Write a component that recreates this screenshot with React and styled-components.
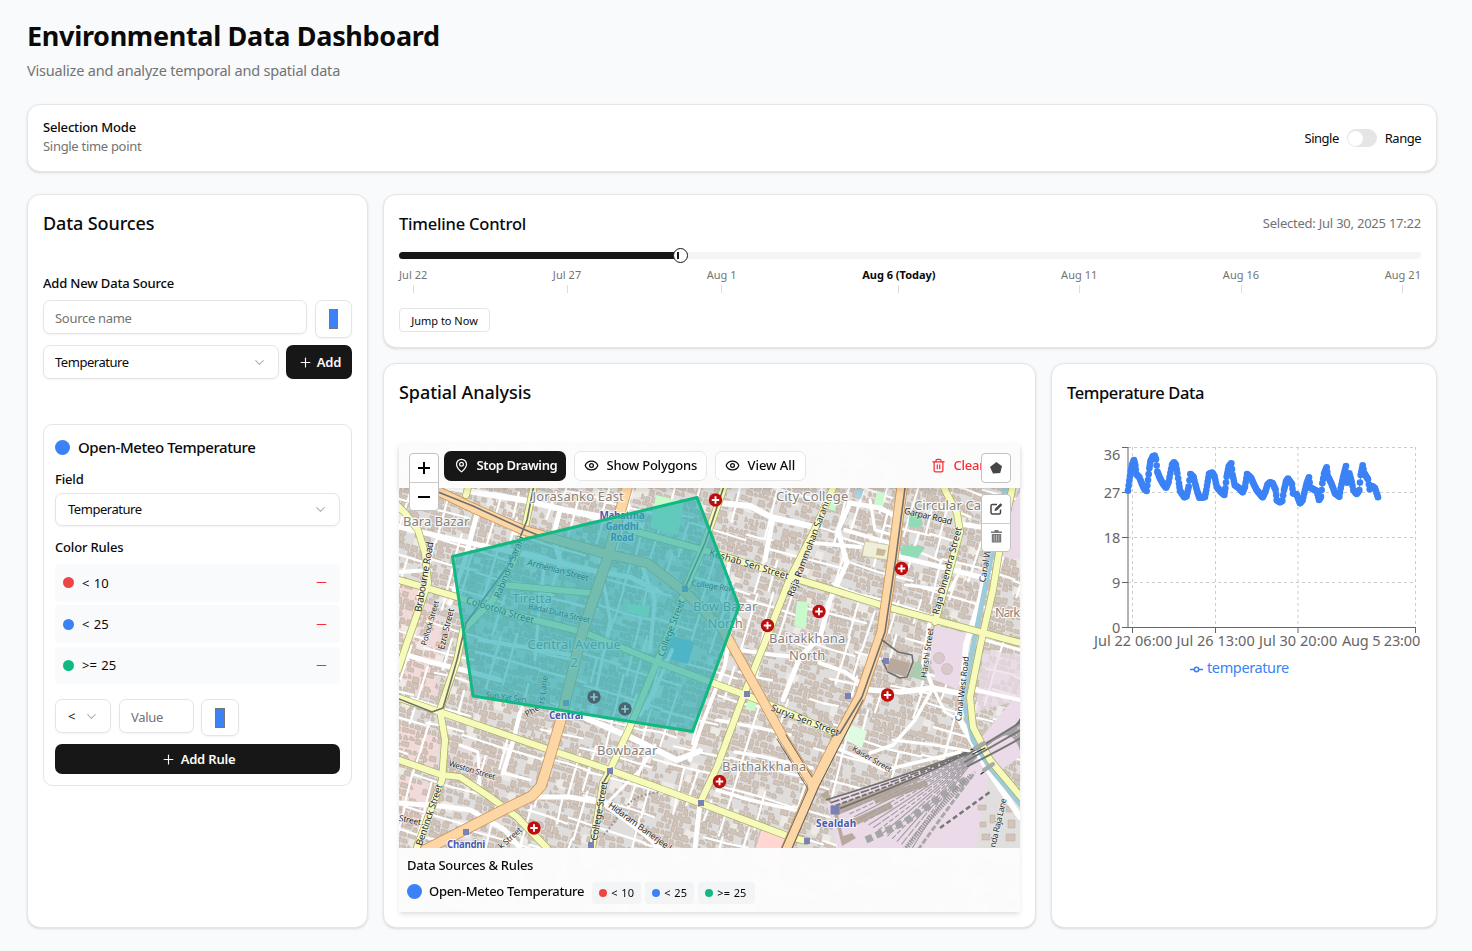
import React from "react";
import styled, { createGlobalStyle } from "styled-components";
import { ChevronDown, Eye, MapPin, Minus, Plus, Trash2 } from "lucide-react";

const GlobalStyle = createGlobalStyle`
  *, *::before, *::after { box-sizing: border-box; }
  body {
    margin: 0;
    background: #f9fafc;
    color: #0a0a0a;
    font-family: "Noto Sans", "Open Sans", sans-serif;
    font-size: 13px;
    letter-spacing: -0.02em;
  }
  h1, h2, h3, p { margin: 0; }
  button, input { font: inherit; letter-spacing: inherit; color: inherit; }
`;

const Page = styled.main`
  display: flex;
  flex-direction: column;
  height: 951px;
  padding: 20px 35px 23px 27px;
`;

const PageTitle = styled.h1`
  font-size: 27px;
  line-height: 32px;
  font-weight: 700;
  letter-spacing: -0.32px;
`;

const PageSubtitle = styled.p`
  margin-top: 7px;
  margin-bottom: 23px;
  font-size: 14.5px;
  line-height: 22px;
  letter-spacing: -0.2px;
  color: #737373;
`;

const Card = styled.section`
  display: flex;
  flex-direction: column;
  background: #fff;
  border: 1px solid #e5e5e5;
  border-radius: 13px;
  box-shadow: 0 1px 3px rgba(0, 0, 0, 0.1), 0 1px 2px -1px rgba(0, 0, 0, 0.1);
  padding: ${(p) => p.$top || 16}px 15px 15px;
`;

const ModeCard = styled(Card)`
  flex: none;
  flex-direction: row;
  align-items: center;
  justify-content: space-between;
  height: 68px;
  margin-bottom: 22px;
  padding: 0 15px;
`;

const ModeName = styled.div`
  font-weight: 500;
  line-height: 19px;
  margin-top: -3px;
  letter-spacing: -0.17px;
`;

const Muted = styled.div`
  line-height: 19px;
  margin-top: ${(p) => p.$lift || 0}px;
  color: #737373;
  letter-spacing: ${(p) => p.$track || -0.3}px;
`;

const SwitchGroup = styled.div`
  display: flex;
  align-items: center;
  gap: 8px;
  letter-spacing: -0.5px;
`;

const SwitchTrack = styled.span`
  display: flex;
  align-items: center;
  width: 30px;
  height: 18px;
  padding: 1px;
  border-radius: 9px;
  background: #e5e5e5;
`;

const SwitchThumb = styled.span`
  width: 15px;
  height: 15px;
  border-radius: 50%;
  background: #fff;
`;

const Columns = styled.div`
  display: grid;
  grid-template-columns: 341px 1fr;
  gap: 15px;
  flex: 1;
  min-height: 0;
`;

const MainColumn = styled.div`
  display: grid;
  grid-template-rows: 154px 1fr;
  gap: 15px;
  min-height: 0;
`;

const BottomRow = styled.div`
  display: grid;
  grid-template-columns: 653px 1fr;
  gap: 15px;
  min-height: 0;
`;

const CardTitle = styled.h2`
  font-size: ${(p) => p.$size || 18}px;
  line-height: 24px;
  font-weight: 500;
  letter-spacing: ${(p) => p.$track || -0.1}px;
`;

const Label = styled.div`
  font-weight: 500;
  line-height: 18px;
  letter-spacing: ${(p) => p.$track || -0.17}px;
`;

const FormRow = styled.div`
  display: flex;
  align-items: flex-start;
  gap: ${(p) => p.$gap || 8}px;
  margin-top: 7px;
`;

const boxed = `
  border: 1px solid #e5e5e5;
  border-radius: 7px;
  background: #fff;
  box-shadow: 0 1px 2px rgba(0, 0, 0, 0.05);
`;

const TextInput = styled.input`
  ${boxed}
  flex: ${(p) => (p.$width ? "none" : 1)};
  width: ${(p) => (p.$width ? p.$width + "px" : "auto")};
  min-width: 0;
  height: 34px;
  padding: ${(p) => (p.$width ? 1 : 2)}px 11px 0;
  letter-spacing: -0.3px;
  &::placeholder { color: #737373; opacity: 1; }
`;

const ColorBox = styled.div`
  ${boxed}
  display: flex;
  align-items: center;
  justify-content: center;
  width: ${(p) => p.$width || 37}px;
  height: ${(p) => p.$height || 38}px;
`;

const ColorSwatch = styled.span`
  width: ${(p) => p.$width || 9}px;
  height: 20px;
  background: #3b82f6;
  border: 1px solid #777;
`;

const SelectBox = styled.div`
  ${boxed}
  display: flex;
  align-items: center;
  justify-content: space-between;
  flex: ${(p) => (p.$width ? "none" : 1)};
  width: ${(p) => (p.$width ? p.$width + "px" : "auto")};
  height: ${(p) => p.$height || 34}px;
  padding: 0 11px 0 ${(p) => (p.$width ? 12 : 11)}px;
  letter-spacing: -0.46px;
  svg { color: #b0b0b0; }
`;

const DarkButton = styled.button`
  display: flex;
  align-items: center;
  justify-content: center;
  gap: ${(p) => p.$gap || 4}px;
  width: ${(p) => p.$width || "100%"};
  height: ${(p) => p.$height || 30}px;
  padding: 0 0 0 1px;
  border: 0;
  border-radius: 7px;
  background: #171717;
  color: #fafafa;
  font-weight: 600;
  letter-spacing: -0.2px;
`;

const SourceCard = styled.div`
  display: flex;
  flex-direction: column;
  margin-top: 45px;
  padding: 11px;
  border: 1px solid #e5e5e5;
  border-radius: 9px;
`;

const SourceHeader = styled.div`
  display: flex;
  align-items: center;
  gap: ${(p) => p.$gap || 8}px;
  line-height: 22px;
  font-size: ${(p) => p.$size || 15}px;
  font-weight: 500;
  letter-spacing: ${(p) => p.$track || -0.4}px;
`;

const Dot = styled.span`
  flex: none;
  width: ${(p) => p.$size}px;
  height: ${(p) => p.$size}px;
  border-radius: 50%;
  background: ${(p) => p.$color};
`;

const FieldLabel = styled(Label)`
  margin: 12px 0 ${(p) => p.$after || 5}px;
`;

const SourceLabel = styled(Label)`
  margin-top: 39px;
  margin-bottom: 1px;
`;

const FieldSelect = styled(SelectBox)`
  flex: none;
  height: 33px;
  padding-left: 12px;
  padding-bottom: 1px;
`;

const RuleList = styled.div`
  display: flex;
  flex-direction: column;
  gap: 3.75px;
`;

const RuleRow = styled.div`
  display: flex;
  align-items: center;
  gap: 8px;
  height: 37.5px;
  padding: 0 11px 0 8px;
  border-radius: 4px;
  background: #f9fafc;
  letter-spacing: 0;
  word-spacing: 1px;
  svg { margin-left: auto; color: #fb2c36; }
`;

const RuleControls = styled.div`
  display: flex;
  align-items: flex-start;
  gap: 8px;
  height: 37px;
  margin: 15px 0 8px;
  ${ColorBox} { margin-left: -1px; }
`;

const TimelineHeader = styled.div`
  display: flex;
  align-items: center;
  justify-content: space-between;
`;

const SliderTrack = styled.div`
  position: relative;
  flex: none;
  height: 7px;
  margin-top: 16px;
  border-radius: 4px;
  background: #f5f5f5;
`;

const SliderRange = styled.div`
  width: 279px;
  height: 7px;
  border-radius: 4px 0 0 4px;
  background: #171717;
`;

const SliderThumb = styled.span`
  position: absolute;
  top: -4px;
  left: 274.4px;
  display: flex;
  align-items: center;
  width: 15px;
  height: 15px;
  padding-left: 3px;
  border: 1px solid #171717;
  border-radius: 50%;
  background: #fff;
  &::after { content: ""; width: 2px; height: 7px; background: #171717; }
`;

const TickRow = styled.div`
  display: flex;
  justify-content: space-between;
  margin-top: 8px;
`;

const Tick = styled.div`
  display: flex;
  flex-direction: column;
  align-items: center;
  gap: 2px;
  font-size: 11px;
  line-height: 16px;
  letter-spacing: ${(p) => (p.$today ? 0 : 0.05)}px;
  font-weight: ${(p) => (p.$today ? 700 : 400)};
  color: ${(p) => (p.$today ? "#0a0a0a" : "#737373")};
  &::after { content: ""; width: 1px; height: 8px; background: #dedede; }
`;

const JumpButton = styled.button`
  width: 91px;
  height: 24px;
  margin-top: 15px;
  padding: 1px 0 0;
  border: 1px solid #e5e5e5;
  border-radius: 4px;
  background: #fff;
  font-size: 11px;
  letter-spacing: 0;
`;

const MapFrame = styled.div`
  position: relative;
  width: 621px;
  height: 468px;
  margin-top: 40px;
  box-shadow: 0 3px 5px -1px rgba(0, 0, 0, 0.14);
`;

const MapCanvas = styled.svg`
  display: block;
  width: 621px;
  height: 468px;
`;

const MapToolbar = styled.div`
  position: absolute;
  inset: 0 0 auto 0;
  display: flex;
  align-items: flex-start;
  gap: 8px;
  height: 44px;
  padding: 7px 35px 0 45px;
  background: rgba(253, 253, 253, 0.955);
  backdrop-filter: blur(4px);
  box-shadow: 0 2px 5px rgba(0, 0, 0, 0.1);
`;

const ToolButton = styled.button`
  display: flex;
  align-items: center;
  gap: 7.5px;
  width: ${(p) => p.$width}px;
  height: 30px;
  padding: 0 0 2px ${(p) => (p.$dark ? 10 : 9)}px;
  border: ${(p) => (p.$dark ? "0" : "1px solid #e5e5e5")};
  border-radius: 7px;
  background: ${(p) => (p.$dark ? "#171717" : "#fff")};
  color: ${(p) => (p.$dark ? "#fafafa" : "#0a0a0a")};
  font-weight: ${(p) => (p.$dark ? 600 : 500)};
  letter-spacing: ${(p) => p.$track || -0.23}px;
  white-space: nowrap;
  svg { position: relative; top: 0.5px; }
`;

const ClearButton = styled(ToolButton)`
  margin-left: auto;
  padding: 0 0 2px;
  border: 0;
  background: none;
  color: #fb2c36;
`;

const MapControls = styled.div`
  position: absolute;
  top: ${(p) => p.$top}px;
  left: ${(p) => p.$left}px;
  display: flex;
  flex-direction: column;
  width: 30px;
  border: 1px solid #c2c2c2;
  border-radius: 4px;
  background: #fff;
  overflow: hidden;
`;

const MapControl = styled.span`
  display: flex;
  align-items: center;
  justify-content: center;
  height: 28px;
  & + & { border-top: 1px solid #ccc; }
`;

const MapLegend = styled.div`
  position: absolute;
  inset: auto 0 0 0;
  height: 64px;
  padding: 8px;
  background: rgba(253, 253, 253, 0.955);
  backdrop-filter: blur(4px);
`;

const LegendRow = styled.div`
  display: flex;
  align-items: flex-start;
  margin-top: 6px;
`;

const Chips = styled.div`
  display: flex;
  gap: 4px;
  margin: 2px 0 0 7.5px;
`;

const Chip = styled.span`
  display: flex;
  align-items: center;
  gap: 4.5px;
  height: 22px;
  width: ${(p) => p.$width}px;
  padding-left: 7px;
  border-radius: 4px;
  background: #f3f4f6;
  font-size: 11px;
  line-height: 22px;
  letter-spacing: 0.12px;
  word-spacing: 0.6px;
  white-space: nowrap;
`;

const ChartSvg = styled.svg`
  display: block;
  width: 354px;
  height: 245px;
  margin-top: 31px;
  overflow: visible;
  letter-spacing: -0.2px;
`;

/* ---------- map drawing ---------- */

function seeded(seed) {
  let s = seed;
  return () => {
    s = (s * 1664525 + 1013904223) % 4294967296;
    return s / 4294967296;
  };
}

function buildBlocks() {
  const rnd = seeded(41);
  let houses = "";
  let yards = "";
  let lanes = "";
  for (let y = -220; y < 460; y += 6.6) {
    let x = -220;
    while (x < 760) {
      const w = 2.4 + rnd() * 5.6;
      const h = 3.2 + rnd() * 3;
      const r = rnd();
      const dy = rnd() * 1.6;
      if (r > 0.22) {
        const cut = rnd() * 2.2;
        const x0 = x.toFixed(1);
        const y0 = (y + dy).toFixed(1);
        houses += `M${x0} ${y0}h${(w - cut).toFixed(1)}v${(h * 0.4).toFixed(1)}h${cut.toFixed(1)}v${(h * 0.6).toFixed(1)}h${(-w).toFixed(1)}z`;
      } else if (r < 0.03) {
        yards += `M${x.toFixed(1)} ${y.toFixed(1)}h${(w + 5).toFixed(1)}v${(h + 5).toFixed(1)}h${(-w - 5).toFixed(1)}z`;
      }
      x += w + 0.9 + rnd() * 1.5;
    }
  }
  for (let y = -210; y < 460; y += 27) {
    let x = -220;
    while (x < 760) {
      const len = 24 + rnd() * 60;
      const j = (rnd() - 0.5) * 14;
      if (rnd() > 0.3) lanes += `M${x.toFixed(1)} ${(y + j).toFixed(1)}l${(len / 2).toFixed(1)} ${((rnd() - 0.5) * 4).toFixed(1)}l${(len / 2).toFixed(1)} ${((rnd() - 0.5) * 4).toFixed(1)}`;
      x += len;
    }
  }
  for (let x = -220; x < 760; x += 21) {
    let y = -210;
    while (y < 460) {
      const len = 18 + rnd() * 42;
      const j = (rnd() - 0.5) * 12;
      if (rnd() > 0.45) lanes += `M${(x + j).toFixed(1)} ${y.toFixed(1)}l${((rnd() - 0.5) * 4).toFixed(1)} ${len.toFixed(1)}`;
      y += len;
    }
  }
  return { houses, yards, lanes };
}

const BLOCKS = buildBlocks();

const WHITE_ROADS = [
  ["720,503 750,506 773,518 810,526", 6],
  ["773,518 765,560", 5],
  ["850,503 838,530 847,563 830,600 820,637 800,657 783,700", 5],
  ["850,503 880,508 897,517", 5],
  ["845,530 890,543", 4],
  ["815,543 860,547", 4],
  ["900,557 945,568 980,577", 5],
  ["960,524 1000,530", 5],
  ["905,585 950,590 958,575", 3],
  ["985,575 980,600 966,645 960,720 985,765 1020,817", 6],
  ["870,690 900,692 933,688 967,695", 5.5],
  ["820,663 845,672 870,690", 4.5],
  ["933,688 923,663 930,620", 4],
  ["933,688 915,720 893,745 870,753", 3.5],
  ["933,688 945,712 960,720", 3],
  ["833,747 860,758 885,770 960,752", 3.5],
  ["893,740 935,745 975,752", 3],
  ["399,653 430,662 463,670 500,680", 5],
  ["399,803 440,806 470,810 505,830 520,848", 5],
  ["520,713 512,745 503,773", 4.5],
  ["540,797 570,797 603,803 643,833 660,848", 5],
  ["583,717 630,737 677,760 700,751", 6],
  ["447,487 480,493 523,500 565,510 603,517 640,525", 6],
  ["560,510 553,537 560,560", 5],
  ["399,527 430,534 470,543 530,556 590,570 630,577 660,592", 5],
  ["478,510 465,560 450,603", 5],
  ["399,572 430,570", 4],
  ["700,803 695,848", 5],
  ["640,560 655,600 650,650", 4],
  ["730,560 722,600 740,620", 4],
  ["733,610 725,665 700,730 690,760", 4],
  ["740,650 775,655 800,657", 4],
  ["717,720 760,728 790,735", 3.5],
  ["735,752 760,756 812,768", 3.5],
  ["717,790 750,800 795,810", 3.5],
  ["640,715 655,690 672,650", 4],
  ["545,560 540,600 535,660", 3],
  ["600,560 610,620 600,670 590,720", 3],
  ["480,640 530,648 570,655", 4],
  ["503,773 530,780", 3],
  ["460,745 478,752 480,790", 3],
  ["610,800 640,770 655,745", 3],
  ["870,500 875,530 893,535", 3],
  ["985,640 1020,650", 3],
  ["975,690 1020,700", 4],
];

const YELLOW_ROADS = [
  "535,480 533,490 525,527 513,563 493,600 463,630 457,660 440,710 445,740 442,780 417,847",
  "398,506 405,513 418,530 425,553 428,583 407,643 398,670",
  "399,580 427,588 457,597 503,612 583,632 657,662 713,683 743,694 773,706 837,734",
  "503,585 590,593",
  "630,530 710,552 790,577 833,590 887,607 1021,643",
  "836,480 833,488 813,533 790,578 763,647 743,697 717,767 700,803",
  "726,480 723,490 703,547 685,590 673,623 657,662 630,727 610,770 603,783 598,813 592,848",
  "399,698 440,712 550,750 610,770 700,803 790,837 806,841",
  "399,760 442,775 460,777 490,797 517,817 547,848",
  "941,480 946,492 957,513 960,532 947,580 935,622",
  "1014,480 1000,547 993,590 980,647 970,697 973,727 990,760 1021,797",
  "470,480 466,495",
];

const ORANGE_ROADS = [
  ["399,478 438,491 473,508 523,530 603,553 647,563 685,592 723,630 733,647 757,690 783,737 813,785", 9],
  ["903,480 902,488 893,557 882,632 860,697 833,747 813,787 786,850", 10],
  ["628,480 627,488 617,523 607,560 583,630 560,723 547,767 541,786 532,796 503,810 425,850", 10],
];

const RAILS = [
  "438,492 473,506 523,529 540,536",
  "535,480 527,520 510,563 466,623 457,660 443,708 432,712 399,699",
  "726,480 705,543 685,588",
  "905,488 896,557 885,632 862,697 840,733 832,736",
  "882,640 898,652 912,655 913,662 907,677 900,678 888,672 882,660",
  "592,848 598,813 603,783 612,768",
];

const TRACKS = Array.from({ length: 19 }, (_, i) => {
  const t = i / 18;
  const sx = 826 + t * 85;
  const sy = 800 + t * 50;
  return `M${sx} ${sy}Q${930 + t * 15} ${768 + t * 26} 978 ${747 + t * 8}T1021 ${712 + t * 40}`;
});

/* text, x, y, angle, size, length */
const STREET_LABELS = [
  ["Brabourne Road", 424, 577, -80, 10, 71],
  ["Pollock Street", 430, 623, -74, 8, 46],
  ["Ezra Street", 446, 629, -76, 9, 42],
  ["Rabindra Sarani", 509, 567, -68, 9.5, 66],
  ["Armenian Street", 558, 570, 15, 9, 63],
  ["Badal Dutta Street", 559, 613, 13, 8, 63],
  ["Colootola Street", 500, 610, 17, 9.5, 70],
  ["Garpar Road", 928, 516, 13, 9, 49],
  ["Raja Rammohan Sarani", 808, 549, -69, 9.5, 101],
  ["Keshab Sen Street", 749, 564, 17, 9.5, 82],
  ["Raja Dinendra Street", 947, 571, -75, 9.5, 90],
  ["Canal W", 985, 566, -80, 9, 33],
  ["College Row", 713, 586, 8, 8, 43],
  ["College Street", 671, 628, -70, 9.5, 60],
  ["College Street", 599, 811, -80, 9.5, 60],
  ["Weston Street", 472, 770, 17, 8, 48],
  ["Bentinck Street", 429, 815, -71, 9.5, 64],
  ["Street", 410, 820, 12, 8.5, 22],
  ["Sun Yat Sen", 506, 697, 8, 8, 41],
  ["Phe", 532, 711, -30, 8.5, 15],
  ["rs Lane", 543, 690, -82, 8.5, 28],
  ["Hidaram Banerjee L", 641, 827, 36, 9, 78],
  ["Surya Sen Street", 805, 720, 21, 9.5, 72],
  ["Kaiser Street", 872, 759, 30, 8, 44],
  ["Harshi Street", 927, 653, -82, 8.5, 50],
  ["Canal West Road", 962, 689, -83, 8.5, 65],
  ["nda Raja Lane", 998, 823, -77, 8.5, 50],
  ["k Street", 510, 838, -42, 8.5, 28],
];

const AREA_LABELS = [
  ["Jorasanko East", 578, 496, 91],
  ["Bara Bazar", 436, 521, 66],
  ["Tiretta", 532, 598, 39],
  ["Central Avenue", 574, 644, 93],
  ["2", 574, 662, 7],
  ["City College", 812, 496, 72],
  ["Circular Canal", 957, 505, 86],
  ["Nark", 1007.5, 612, 25],
  ["Baitakkhana", 807, 638, 76],
  ["North", 807, 655, 36],
  ["Bow Bazar", 725, 606, 64],
  ["North", 725, 623, 35],
  ["Bowbazar", 627, 750, 60],
  ["Baithakkhana", 764, 766, 84],
];

const STATION_LABELS = [
  ["Mahatma", 622, 515, 45],
  ["Gandhi", 622, 526, 33],
  ["Road", 622, 537, 23],
  ["Central", 566, 715, 34],
  ["Chandni", 466, 844, 38],
  ["Sealdah", 836, 823, 40],
];

const HOSPITALS = [
  [715.5, 500], [901.5, 568.5], [819, 611.5], [767.5, 625.5],
  [887.5, 695], [719.5, 781.5], [534, 828], [594, 697, 1], [625, 709, 1],
];

const STATIONS = [
  [685, 589, 6], [566, 703, 6], [610, 771, 6], [701, 803, 6], [591, 845, 6],
  [466, 832, 6], [747, 694, 6], [848, 696, 6], [886, 661, 6], [807, 841, 6],
  [835, 810, 9],
];

function MapDrawing() {
  return (
    <MapCanvas viewBox="399 444 621 468" fontFamily="Noto Sans, sans-serif">
      <rect x="399" y="444" width="622" height="468" fill="#dfdedd" />
      <g fill="#f2dad9">
        <path d="M399 580L422 590L440 620L436 700L399 690ZM399 722L440 735L436 770L399 755ZM399 775L436 785L420 830L399 825Z" />
        <path d="M448 735L500 750L500 790L448 770Z" opacity=".45" />
      </g>
      <g transform="translate(399 488) rotate(16)">
        <path d={BLOCKS.yards} fill="#eeebe6" />
        <path d={BLOCKS.houses} fill="#d0c4bb" stroke="#bcab9f" strokeWidth=".55" />
        <path d={BLOCKS.lanes} fill="none" stroke="#fff" strokeWidth="2.2" strokeLinecap="round" />
      </g>
      <path d="M762 828L788 840L784 860L752 860Z" fill="#ffd6d1" />
      <g fill="#c8facc">
        <path d="M656 495L684 502L678 535L650 528Z" />
        <path d="M830 498L838 500L835 511L828 509Z" />
        <path d="M877 492L885 494L882 508L874 505Z" />
        <path d="M797 601L808 602L806 628L794 626Z" />
        <path d="M851 725L867 731L862 748L845 740Z" fill="#dffce2" />
        <path d="M748 700L757 703L754 711L745 709Z" />
        <path d="M628 603L650 607L648 617L626 612Z" />
      </g>
      <g fill="#aae0cb">
        <path d="M910 512L922 516L920 528L908 526Z" fill="#8fdcb6" />
        <path d="M903 545L925 547L918 558L900 555Z" fill="#8fdcb6" />
        <path d="M672 636L694 642L688 664L664 658Z" fill="#8cc0e8" />
        <path d="M918 660L930 664L925 681L908 676Z" fill="#aacbaf" />
        <path d="M855 489L864 489L861 499L855 497Z" fill="#aad3df" />
      </g>
      <path d="M865 541L889 545L887 560L862 556Z" fill="#f2efd8" stroke="#b8b27a" strokeWidth=".6" />
      <path d="M877 548L886 550L884 556L876 555Z" fill="#c9b99a" />

      {/* rail yard */}
      <g fill="#ebdbe8">
        <path d="M826 800L870 786L965 757L1021 690L1021 756L990 778L1000 800L975 850L838 850Z" />
        <path d="M935 625L968 634L958 690L936 680L930 655Z" />
        <path d="M1004 520L1021 490L1021 560L1000 556Z" />
        <path d="M984 650L1021 655L1021 700L975 712Z" opacity=".7" />
      </g>
      <g fill="#d9c8cc" stroke="#c3aeb2" strokeWidth=".6">
        <circle cx="939" cy="658" r="5.5" />
        <circle cx="947" cy="669" r="5.5" />
      </g>
      <path d="M990 770L1021 800L1021 850L975 850Z" fill="#e0dfdd" />
      <path d="M978 805h8v5h-8zM990 815h5v8h-5zM980 822h6v5h-6zM1006 806h8v6h-8zM1008 820h7v8h-7zM982 834h8v6h-8zM1006 834h9v7h-9z" fill="#d0c4bb" stroke="#bcab9f" strokeWidth=".5" />
      <path d="M820 795L828 790L842 846L856 838L852 833L843 836L838 815L920 780L918 776L834 806Z" fill="#b9a99c" />
      <path d="M846 822L890 802L893 808L850 828ZM872 797L926 780L928 786L876 804Z" fill="#b9a99c" />
      <g fill="none">
        {TRACKS.map((d, i) => (
          <path key={i} d={d} stroke={i < 4 ? "#707070" : "#a3a0a3"} strokeWidth={i < 4 ? 1.7 : 1.2} strokeDasharray={i % 3 === 0 ? "none" : i % 3 === 1 ? "9 1.5" : "5 2"} />
        ))}
        <path d="M866 840L905 822L968 778" stroke="#a5a5a5" strokeWidth="7" strokeDasharray="7 4" />
        <path d="M905 850Q930 815 972 775" stroke="#999" strokeWidth="5" strokeDasharray="1.4 1" />
        <path d="M918 850Q945 812 975 772" stroke="#a8a8a8" strokeWidth="3" strokeDasharray="6 2" />
        <path d="M940 828L990 792" stroke="#777" strokeWidth="2.5" strokeDasharray="5 3" />
        <path d="M628 805Q635 795 660 792M604 835L622 812" stroke="#999" strokeWidth="2" strokeDasharray="2 2" />
      </g>

      <g fill="none" strokeLinejoin="round" strokeLinecap="round">
        {WHITE_ROADS.map(([p, w], i) => (
          <polyline key={i} points={p} stroke="#fff" strokeWidth={w} />
        ))}
        <polyline points="1007,480 1005,488 990,563 973,647 963,700 973,740 990,768 1021,805" stroke="#9ccbd9" strokeWidth="5" />
        {YELLOW_ROADS.map((p) => (
          <polyline key={p} points={p} stroke="#a9ad5c" strokeWidth="7.6" />
        ))}
        {YELLOW_ROADS.map((p) => (
          <polyline key={p} points={p} stroke="#f6fabb" strokeWidth="6.2" />
        ))}
        {ORANGE_ROADS.map(([p, w]) => (
          <polyline key={p} points={p} stroke="#cc9658" strokeWidth={w + 1.2} />
        ))}
        {ORANGE_ROADS.map(([p, w]) => (
          <polyline key={p} points={p} stroke="#fcd6a4" strokeWidth={w - 0.4} />
        ))}
        {RAILS.map((p) => (
          <polyline key={p} points={p} stroke="#6f6f6f" strokeWidth="1.6" />
        ))}
        <path d="M777 739L808 789L782 848M786 735L812 777M863 700L819 786L792 848" stroke="#555" strokeWidth=".9" />
        <path d="M965 756Q1000 735 1021 722M965 762Q1000 742 1021 730M968 766Q1000 750 1021 738" stroke="#777" strokeWidth="2" />
        <path d="M971 750L983 744M973 754L985 748M981 774L993 765" stroke="#333" strokeWidth="1.2" />
        <path d="M975 748L984 743M984 770L993 764" stroke="#aaa" strokeWidth="4" />
      </g>
      <path d="M890 658L910 663L906 677L887 671Z" fill="#b9a99c" />

      <g fill="#7a82b5">
        {STATIONS.map(([x, y, s]) => (
          <rect key={x} x={x - s / 2} y={y - s / 2} width={s} height={s} />
        ))}
      </g>
      <g fill="#2b2b2b" stroke="#fff" strokeOpacity=".55" strokeWidth="1.4" paintOrder="stroke" textAnchor="middle">
        {STREET_LABELS.map(([t, x, y, a, s, l], i) => (
          <text key={i} transform={`translate(${x} ${y}) rotate(${a})`} y={s * 0.35} fontSize={s} textLength={l}>{t}</text>
        ))}
      </g>
      <g fill="#85817f" stroke="#fff" strokeOpacity=".85" strokeWidth="2.4" strokeLinejoin="round" paintOrder="stroke" textAnchor="middle" fontSize="13">
        {AREA_LABELS.map(([t, x, y, l], i) => (
          <text key={i} x={x} y={y + 4.5} textLength={l}>{t}</text>
        ))}
      </g>
      <g fill="#4a58ad" stroke="#fff" strokeOpacity=".8" strokeWidth="2" paintOrder="stroke" textAnchor="middle" fontWeight="700" fontSize="10">
        {STATION_LABELS.map(([t, x, y, l]) => (
          <text key={t} x={x} y={y + 3.5} textLength={l}>{t}</text>
        ))}
      </g>
      {HOSPITALS.filter((h) => !h[2]).map(([x, y]) => (
        <g key={x}>
          <circle cx={x} cy={y} r="6.7" fill="#bf0d0d" />
          <path d={`M${x - 3.7} ${y}h7.4M${x} ${y - 3.7}v7.4`} stroke="#fff" strokeWidth="1.9" />
        </g>
      ))}
      <path d="M452.5 556.5L697 497.5L739 606.5L692.5 731.5L473 696Z" fill="#30b0b6" fillOpacity=".67" stroke="#10b981" strokeWidth="3" strokeLinejoin="round" />
      {HOSPITALS.filter((h) => h[2]).map(([x, y]) => (
        <g key={x}>
          <circle cx={x} cy={y} r="6.7" fill="#4a6570" />
          <path d={`M${x - 3.7} ${y}h7.4M${x} ${y - 3.7}v7.4`} stroke="#86ccd0" strokeWidth="1.7" />
        </g>
      ))}
    </MapCanvas>
  );
}

/* ---------- chart ---------- */

const TREND = [
  [54,152],[58,122],[62,95],[66,75],[72,60],[76,76],[79,103],[88,112],[95,130],[103,147],[110,153],[114,120],[118,85],[121,65],[128,50],[134,47],[138,58],[142,95],[150,115],[158,130],[168,143],[176,125],[181,100],[186,75],[192,67],[198,75],[202,100],[207,130],[210,152],[223,172],[230,168],[236,140],[241,102],[251,112],[256,133],[262,155],[268,173],[285,171],[289,150],[293,125],[297,102],[306,98],[314,110],[320,140],[332,155],[343,165],[346,145],[350,110],[356,80],[364,70],[368,105],[374,135],[388,145],[398,157],[405,140],[411,102],[424,115],[430,130],[440,150],[458,172],[466,155],[472,135],[480,127],[488,130],[497,150],[500,180],[510,187],[517,182],[522,150],[528,125],[534,116],[546,133],[549,160],[560,163],[570,190],[578,180],[585,150],[590,130],[597,112],[601,143],[620,153],[627,180],[633,170],[637,130],[642,102],[650,82],[654,110],[664,130],[675,160],[688,170],[692,145],[699,112],[708,78],[711,128],[718,100],[725,125],[730,150],[740,162],[748,150],[752,105],[758,76],[763,100],[774,118],[779,148],[786,138],[795,145],[804,172],
];

const POINTS = [];
for (let i = 0; i < TREND.length - 1; i++) {
  const [x0, y0] = TREND[i];
  const [x1, y1] = TREND[i + 1];
  const n = Math.max(2, Math.round((x1 - x0) / 2.1));
  for (let k = 0; k < n; k++) {
    POINTS.push([1110 + (x0 + ((x1 - x0) * k) / n) / 3, 440 + (y0 + ((y1 - y0) * k) / n) / 3]);
  }
}
POINTS.push([1378, 497.3]);

const Y_TICKS = [[36, 447.5, 455], [27, 492.5, 492.5], [18, 537.5, 537.5], [9, 582.5, 582.5], [0, 627.5, 627.5]];
const X_TICKS = [["Jul 22 06:00", 1132.5, 1133], ["Jul 26 13:00", 1215.5, 1215.5], ["Jul 30 20:00", 1298, 1298], ["Aug 5 23:00", 1415.5, 1381]];

function TemperatureChart() {
  return (
    <ChartSvg viewBox="1067 436 354 245" fontFamily="Noto Sans, sans-serif" fontSize="14.5">
      <g stroke="#ccc" strokeDasharray="3 3" fill="none">
        {Y_TICKS.slice(0, 4).map(([v, y]) => <path key={v} d={`M1128 ${y}H1416`} />)}
        {X_TICKS.map(([t, x]) => <path key={t} d={`M${x} 447V627`} />)}
      </g>
      <g stroke="#666" fill="none">
        <path d="M1128 447V628M1128 627.5H1416" />
        {Y_TICKS.map(([v, y]) => <path key={v} d={`M1122 ${y}h6`} />)}
        {X_TICKS.map(([t, x]) => <path key={t} d={`M${x} 627v6`} />)}
      </g>
      <g fill="#666">
        {Y_TICKS.map(([v, , y]) => <text key={v} x="1120" y={y + 5} textAnchor="end">{v}</text>)}
        {X_TICKS.map(([t, , x]) => <text key={t} x={x} y="646" textAnchor="middle" textLength="78">{t}</text>)}
      </g>
      <polyline points={POINTS.map((p) => p.join(",")).join(" ")} fill="none" stroke="#3b82f6" />
      <g fill="#3b82f6">
        {POINTS.map(([x, y], i) => <circle key={i} cx={x} cy={y} r="3.3" />)}
      </g>
      <g stroke="#3b82f6" strokeWidth="1.6" fill="none">
        <path d="M1190 669.5h4.2M1198.8 669.5h4.2" />
        <circle cx="1196.5" cy="669.5" r="2.2" />
      </g>
      <text x="1207" y="673" fill="#3b82f6" textLength="82">temperature</text>
    </ChartSvg>
  );
}

/* ---------- page ---------- */

const RULES = [
  { id: "cold", color: "#ef4444", text: "< 10", chip: 49 },
  { id: "mild", color: "#3b82f6", text: "< 25", chip: 49 },
  { id: "warm", color: "#10b981", text: ">= 25", chip: 57 },
];

const DATES = ["Jul 22", "Jul 27", "Aug 1", "Aug 6 (Today)", "Aug 11", "Aug 16", "Aug 21"];

function DataSources() {
  return (
    <Card>
      <CardTitle>Data Sources</CardTitle>
      <SourceLabel>Add New Data Source</SourceLabel>
      <FormRow>
        <TextInput placeholder="Source name" />
        <ColorBox><ColorSwatch /></ColorBox>
      </FormRow>
      <FormRow $gap={7}>
        <SelectBox>Temperature<ChevronDown size={15} strokeWidth={1.8} /></SelectBox>
        <DarkButton $width="66px" $height={34}><Plus size={15} strokeWidth={1.8} />Add</DarkButton>
      </FormRow>
      <SourceCard>
        <SourceHeader><Dot $size={15} $color="#3b82f6" />Open-Meteo Temperature</SourceHeader>
        <FieldLabel>Field</FieldLabel>
        <FieldSelect>Temperature<ChevronDown size={15} strokeWidth={1.8} /></FieldSelect>
        <FieldLabel $after={8}>Color Rules</FieldLabel>
        <RuleList>
          {RULES.map((r) => (
            <RuleRow key={r.id}><Dot $size={11} $color={r.color} />{r.text}<Minus size={15} strokeWidth={1.8} /></RuleRow>
          ))}
        </RuleList>
        <RuleControls>
          <SelectBox $width={56}>&lt;<ChevronDown size={15} strokeWidth={1.8} /></SelectBox>
          <TextInput $width={75} placeholder="Value" />
          <ColorBox $width={38} $height={37}><ColorSwatch $width={10} /></ColorBox>
        </RuleControls>
        <DarkButton $gap={5}><Plus size={15} strokeWidth={1.8} />Add Rule</DarkButton>
      </SourceCard>
    </Card>
  );
}

function Timeline() {
  return (
    <Card $top={17}>
      <TimelineHeader>
        <CardTitle $size={16.5} $track={-0.2}>Timeline Control</CardTitle>
        <Muted $lift={-2} $track={-0.23}>Selected: Jul 30, 2025 17:22</Muted>
      </TimelineHeader>
      <SliderTrack><SliderRange /><SliderThumb /></SliderTrack>
      <TickRow>
        {DATES.map((d) => <Tick key={d} $today={d.includes("Today")}>{d}</Tick>)}
      </TickRow>
      <JumpButton>Jump to Now</JumpButton>
    </Card>
  );
}

function SpatialAnalysis() {
  return (
    <Card $top={16}>
      <CardTitle $track={-0.05}>Spatial Analysis</CardTitle>
      <MapFrame>
        <MapDrawing />
        <MapToolbar>
          <ToolButton $dark $width={122} $track={-0.38}><MapPin size={15} />Stop Drawing</ToolButton>
          <ToolButton $width={133}><Eye size={15} />Show Polygons</ToolButton>
          <ToolButton $width={91} $track={-0.05}><Eye size={15} />View All</ToolButton>
          <ClearButton $width={54}><Trash2 size={15} />Clear</ClearButton>
        </MapToolbar>
        <MapControls $top={9} $left={10}>
          <MapControl><svg width="12" height="12"><path d="M0 6h12M6 0v12" stroke="#000" strokeWidth="2" /></svg></MapControl>
          <MapControl><svg width="12" height="12"><path d="M0 6h12" stroke="#000" strokeWidth="2" /></svg></MapControl>
        </MapControls>
        <MapControls $top={9} $left={582}>
          <MapControl><svg width="12" height="12"><path d="M6.4 0L12 4.2L10.2 11L3 11.6L0 5Z" fill="#464646" /></svg></MapControl>
        </MapControls>
        <MapControls $top={50} $left={582}>
          <MapControl>
            <svg width="13" height="15" viewBox="0 0 13 15" fill="none" stroke="#464646">
              <path d="M7 2.5H2.5Q1 2.5 1 4V10.5Q1 12 2.5 12H9Q10.5 12 10.5 10.5V7.5" strokeWidth="1.5" />
              <path d="M4.5 9L5 6.8L10.5 1.3L12.3 3.1L6.8 8.5Z" fill="#464646" stroke="none" />
            </svg>
          </MapControl>
          <MapControl>
            <svg width="11" height="15">
              <path d="M3.5 0h4v1.5H11V3H0V1.5H3.5ZM.8 4H10.2V12.5H.8Z" fill="#777" />
              <path d="M3.2 5v6.5M5.5 5v6.5M7.8 5v6.5" stroke="#ccc" strokeWidth=".8" />
            </svg>
          </MapControl>
        </MapControls>
        <MapLegend>
          <Label $track={-0.26}>Data Sources &amp; Rules</Label>
          <LegendRow>
            <SourceHeader $size={13} $track={-0.28} $gap={7}><Dot $size={15} $color="#3b82f6" />Open-Meteo Temperature</SourceHeader>
            <Chips>
              {RULES.map((r) => <Chip key={r.id} $width={r.chip}><Dot $size={8} $color={r.color} />{r.text}</Chip>)}
            </Chips>
          </LegendRow>
        </MapLegend>
      </MapFrame>
    </Card>
  );
}

export default function App() {
  return (
    <>
      <GlobalStyle />
      <Page>
        <PageTitle>Environmental Data Dashboard</PageTitle>
        <PageSubtitle>Visualize and analyze temporal and spatial data</PageSubtitle>
        <ModeCard>
          <div>
            <ModeName>Selection Mode</ModeName>
            <Muted>Single time point</Muted>
          </div>
          <SwitchGroup>
            Single<SwitchTrack><SwitchThumb /></SwitchTrack>Range
          </SwitchGroup>
        </ModeCard>
        <Columns>
          <DataSources />
          <MainColumn>
            <Timeline />
            <BottomRow>
              <SpatialAnalysis />
              <Card $top={17}>
                <CardTitle $size={16.5} $track={-0.4}>Temperature Data</CardTitle>
                <TemperatureChart />
              </Card>
            </BottomRow>
          </MainColumn>
        </Columns>
      </Page>
    </>
  );
}
